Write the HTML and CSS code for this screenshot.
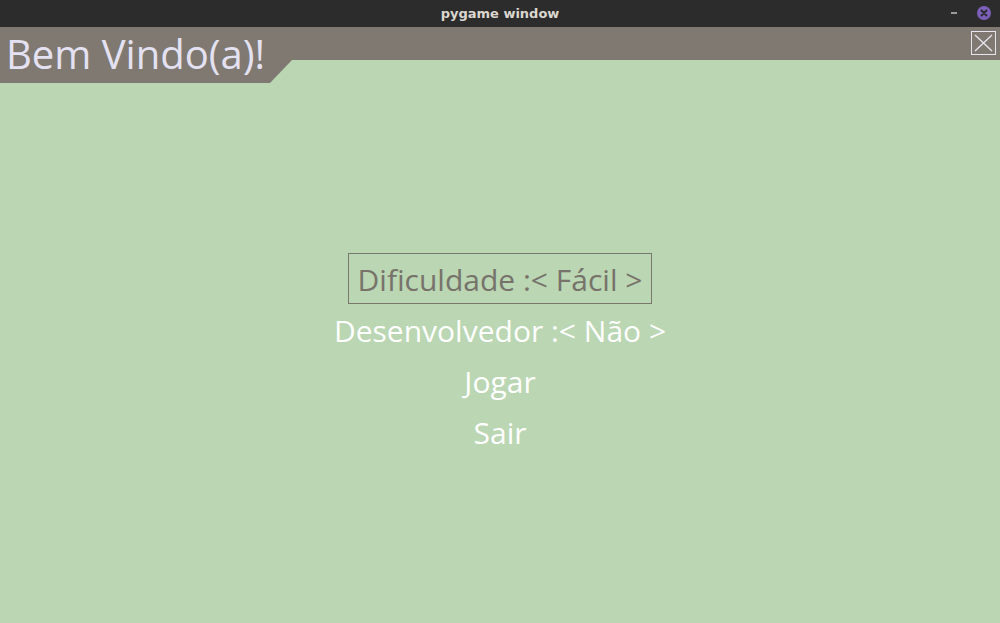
FILE: index.html
```html
<!DOCTYPE html>
<html>
<head>
<meta charset="utf-8">
<link rel="stylesheet" href="styles.css">
</head>
<body>
<div class="window">
  <div class="titlebar">
    <span class="wintitle">pygame window</span>
    <div class="controls">
      <span class="minimize"></span>
      <span class="closebtn">
        <svg width="14" height="14" viewBox="0 0 14 14"><path d="M4.5 4.5 L9.5 9.5 M9.5 4.5 L4.5 9.5" stroke="#2c2c2c" stroke-width="2" stroke-linecap="round"/></svg>
      </span>
    </div>
  </div>
  <div class="content">
    <div class="header">
      <div class="tab"><span class="tabtitle">Bem Vindo(a)!</span></div>
      <div class="bar">
        <span class="menuclose">
          <svg width="25" height="24" viewBox="0 0 25 24"><rect x="0.5" y="0.5" width="24" height="23" fill="none" stroke="#e6e4ee" stroke-width="1"/><path d="M4 4 L21 20 M21 4 L4 20" stroke="#e6e4ee" stroke-width="1.3"/></svg>
        </span>
      </div>
    </div>
    <div class="menu">
      <div class="item selected">Dificuldade :&lt; Fácil &gt;</div>
      <div class="item">Desenvolvedor :&lt; Não &gt;</div>
      <div class="item">Jogar</div>
      <div class="item">Sair</div>
    </div>
  </div>
</div>
</body>
</html>
```
FILE: styles.css
```css
html, body {
  margin: 0;
  padding: 0;
  width: 1000px;
  height: 623px;
  overflow: hidden;
}
.window {
  width: 1000px;
  height: 623px;
  display: flex;
  flex-direction: column;
}
.titlebar {
  height: 27px;
  background: #2c2c2c;
  display: flex;
  align-items: center;
  justify-content: center;
  position: relative;
}
.wintitle {
  font-family: "DejaVu Sans", sans-serif;
  font-weight: bold;
  font-size: 13px;
  color: #dcd8d0;
}
.controls {
  position: absolute;
  right: 9px;
  top: 6px;
  display: flex;
  align-items: center;
  gap: 20px;
}
.minimize {
  width: 6px;
  height: 2px;
  background: #9a9a9a;
}
.closebtn {
  width: 14px;
  height: 14px;
  border-radius: 50%;
  background: #7c5fba;
  display: flex;
}
.content {
  flex: 1;
  background: #bad6b3;
  display: flex;
  flex-direction: column;
}
.header {
  display: flex;
  align-items: flex-start;
}
.tab {
  width: 292px;
  height: 56px;
  background: #7f7972;
  clip-path: polygon(0 0, 292px 0, 292px 33px, 270px 56px, 0 56px);
  display: flex;
  align-items: center;
}
.tabtitle {
  font-family: "Open Sans", sans-serif;
  font-size: 40px;
  color: #e4e2f2;
  padding-left: 6px;
  line-height: 56px;
  margin-top: -2px;
}
.bar {
  flex: 1;
  height: 33px;
  background: #7f7972;
  display: flex;
  justify-content: flex-end;
  align-items: flex-start;
  padding-right: 4px;
}
.menuclose {
  margin-top: 4px;
  display: flex;
}
.menu {
  display: flex;
  flex-direction: column;
  align-items: center;
  padding-top: 170px;
}
.item {
  font-family: "Open Sans", sans-serif;
  font-size: 30px;
  color: #ffffff;
  height: 51px;
  line-height: 51px;
  padding: 0 9px;
  box-sizing: border-box;
  border: 1px solid transparent;
}
.item.selected {
  color: #77736b;
  border-color: #7a776d;
}
```
